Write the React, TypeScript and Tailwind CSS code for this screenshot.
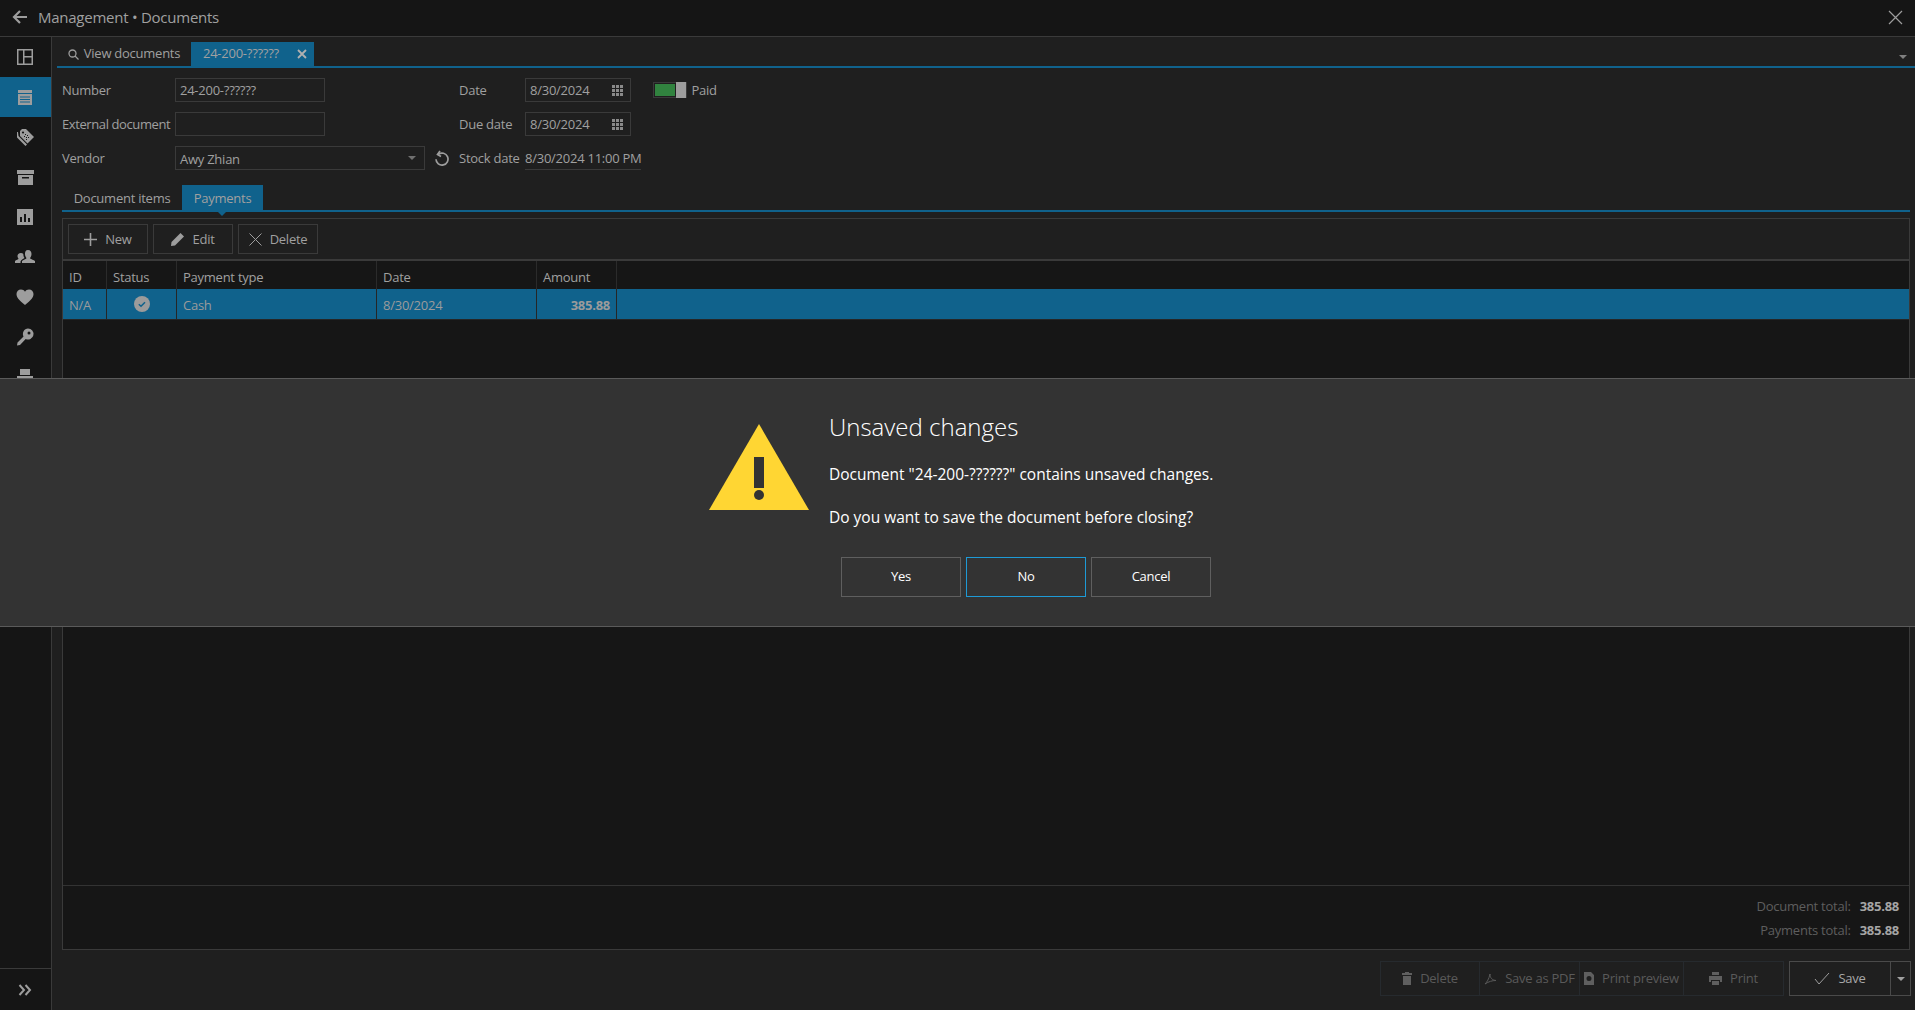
import { ReactNode } from "react";

const grey = "#9d9d9d";

function NavIcon({ active, children }: { active?: boolean; children: ReactNode }) {
  return (
    <div className={`flex h-10 shrink-0 items-center justify-center pr-px ${active ? "bg-[#10628c]" : ""}`}>
      <svg width="20" height="20" viewBox="0 0 20 20" fill={grey}>
        {children}
      </svg>
    </div>
  );
}

function Sidebar() {
  return (
    <aside className="flex w-[52px] shrink-0 flex-col border-r border-[#3a3a3a] bg-[#151515]">
      <div className="flex-1 overflow-hidden">
        <NavIcon>
          <path d="M2 2h16v16H2z M3.500 3.500v13H8v-13z M9.500 3.500V9h7V3.500z M9.500 10.500v6h7v-6z" fillRule="evenodd" />
        </NavIcon>
        <NavIcon active>
          <path d="M3 3h14v3H3z" />
          <path
            d="M3 7h14v11H3z M5 9.500v1h10v-1z M5 12v1h10v-1z M5 14.500v1h10v-1z"
            fillRule="evenodd"
          />
        </NavIcon>
        <NavIcon>
          <path d="M7 2h4l8 8-6.500 6.500L5 9V4z" />
          <path d="M3 5l.5 4 8.500 8.500-1.500 1.500L2 10.500V5z" />
          <circle cx="8" cy="5.500" r="1.100" fill="#151515" />
          <path d="M10 7h1v1h-1z M12 8h1v1h-1z M9 9h1v1H9z M11 10h1v1h-1z M13 10h1v1h-1z M11 12h1v1h-1z" fill="#151515" />
        </NavIcon>
        <NavIcon>
          <path d="M2 3h17v4H2z" />
          <path d="M3 8h15v10H3z M7 10v1.500h7V10z" fillRule="evenodd" />
        </NavIcon>
        <NavIcon>
          <path d="M2 2h16v16H2z M5 10v5h2v-5z M9 7v8h2V7z M13 11v4h2v-4z" fillRule="evenodd" />
        </NavIcon>
        <NavIcon>
          <path d="M13 3c2.500 0 3.500 2 3.500 4 0 2-1 3.500-1.500 4 0 1 3 1.500 5 3v2H7v-2c2-1.500 4.500-2 4.500-3-.5-.5-1.500-2-1.500-4s.5-4 3-4z" />
          <path d="M6 6c1 0 1.800.4 2.300 1 0 1.500.5 3 1.200 4-.5.5-3.500 1.500-4 3.500V16H0v-2c1-1 3.500-1.500 3.500-2.500-.5-.5-1-1.500-1-2.500 0-1.500 1-3 3.500-3z" />
        </NavIcon>
        <NavIcon>
          <path d="M10 18C4 13 1.500 10.500 1.500 7c0-2.500 2-4.500 4.500-4.500 1.700 0 3.200.9 4 2.300.8-1.400 2.300-2.300 4-2.300 2.500 0 4.500 2 4.500 4.500 0 3.500-2.500 6-8.500 11z" />
        </NavIcon>
        <NavIcon>
          <path
            d="M13 1.500a5.500 5.500 0 1 1-2.300 10.500L5 18l-3 .5.500-3 6-6A5.500 5.500 0 0 1 13 1.500z M14 4.500a1.500 1.500 0 1 0 0 3 1.500 1.500 0 0 0 0-3z"
            fillRule="evenodd"
          />
        </NavIcon>
        <NavIcon>
          <path d="M5 2h10v6H5z M2 9h16v8H2z" />
        </NavIcon>
      </div>
      <div className="flex h-[42px] shrink-0 items-center justify-center border-t border-[#3a3a3a] pr-px">
        <svg width="14" height="12" viewBox="0 0 14 12" fill="none" stroke={grey} strokeWidth="2">
          <path d="M1.500 1l4.500 5-4.500 5 M7.500 1l4.500 5-4.500 5" />
        </svg>
      </div>
    </aside>
  );
}

function Field({ w, children, arrow }: { w: string; children?: ReactNode; arrow?: boolean }) {
  return (
    <div className={`flex h-6 items-center justify-between border border-[#3a3a3a] pl-1 pr-2 ${w}`}>
      <span>{children}</span>
      {arrow && <span className="border-x-4 border-t-4 border-x-transparent border-t-[#707070]" />}
    </div>
  );
}

function DateField({ value }: { value: string }) {
  return (
    <div className="flex h-6 w-[106px] items-center justify-between border border-[#3a3a3a] pl-1 pr-[7px]">
      <span>{value}</span>
      <svg width="11" height="11" viewBox="0 0 11 11" fill="#8a8a8a">
        <path d="M0 0h3v3H0z M4 0h3v3H4z M8 0h3v3H8z M0 4h3v3H0z M4 4h3v3H4z M8 4h3v3H8z M0 8h3v3H0z M4 8h3v3H4z M8 8h3v3H8z" />
      </svg>
    </div>
  );
}

function DocumentForm() {
  return (
    <div className="flex h-[117px] shrink-0 pl-[10px] pt-[10px] text-[13px] leading-none">
      <div className="grid w-[363px] shrink-0 grid-cols-[113px_1fr] content-start items-center gap-y-[10px]">
        <span>Number</span>
        <Field w="w-[150px]">24-200-??????</Field>
        <span className="tracking-[-0.4px]">External document</span>
        <Field w="w-[150px]" />
        <span>Vendor</span>
        <div className="flex items-center">
          <Field w="w-[250px]" arrow>
            <span className="relative top-px">Awy Zhian</span>
          </Field>
          <svg className="ml-[9px]" width="15" height="16" viewBox="0 0 15 16" fill="none" stroke={grey} strokeWidth="1.700">
            <path d="M4.500 4.200a6 6 0 1 1-2.500 5" />
            <path d="M6 1L3.500 4.500 7 6.500" />
          </svg>
        </div>
      </div>
      <div className="ml-[34px] grid grid-cols-[66px_auto] content-start items-center gap-y-[10px]">
        <span>Date</span>
        <DateField value="8/30/2024" />
        <span>Due date</span>
        <DateField value="8/30/2024" />
        <span>Stock date</span>
        <span className="flex h-6 items-center border-b border-[#3a3a3a] pt-px whitespace-nowrap">8/30/2024 11:00 PM</span>
      </div>
      <div className="ml-[12px] flex h-6 items-center gap-1 self-start">
        <div className="flex h-4 w-[34px] items-stretch border border-[#3a3a3a]">
          <span className="m-px flex-1 bg-[#31833f]" />
          <span className="-my-px w-[10px] bg-[#9d9d9d]" />
        </div>
        <span>Paid</span>
      </div>
    </div>
  );
}

function ToolButton({ icon, label }: { icon: ReactNode; label: string }) {
  return (
    <button className="flex h-[30px] w-20 items-center justify-center gap-2 border border-[#3a3a3a] pt-px text-[13px]">
      {icon}
      <span>{label}</span>
    </button>
  );
}

const columns = [
  { head: "ID", cell: "N/A", w: "w-[44px]", align: "pl-[6px]" },
  { head: "Status", cell: "", w: "w-[70px]", align: "justify-center" },
  { head: "Payment type", cell: "Cash", w: "w-[200px]", align: "pl-[6px]" },
  { head: "Date", cell: "8/30/2024", w: "w-[160px]", align: "pl-[6px]" },
  { head: "Amount", cell: "385.88", w: "w-[80px]", align: "justify-end pr-[6px] font-bold" },
];

function PaymentsTable() {
  return (
    <div className="flex min-h-0 flex-1 flex-col bg-[#161616]">
      <div className="flex h-[28px] shrink-0 text-[13px]">
        {columns.map((c) => (
          <div key={c.head} className={`flex items-center border-r border-[#2b2b2b] pt-[5px] pl-[6px] ${c.w}`}>
            {c.head}
          </div>
        ))}
      </div>
      <div className="flex h-[31px] shrink-0 border-b border-[#262626] bg-[#10628c] text-[13px] text-[#9b9b9b]">
        {columns.map((c) => (
          <div key={c.head} className={`flex items-center border-r border-[#262626] ${c.w} ${c.align}`}>
            {c.head === "Status" ? (
              <svg width="16" height="16" viewBox="0 0 16 16">
                <circle cx="8" cy="8" r="8" fill="#9b9b9b" />
                <path d="M4.800 8.200l2.200 2 4-4" fill="none" stroke="#10628c" strokeWidth="1.500" />
              </svg>
            ) : (
              <span className="relative top-[2px]">{c.cell}</span>
            )}
          </div>
        ))}
      </div>
      <div className="flex-1" />
    </div>
  );
}

function Totals() {
  return (
    <div className="flex h-[64px] shrink-0 flex-col items-end gap-[6px] border-t border-[#333] bg-[#161616] pr-[10px] pt-[11px] text-[13px] leading-[18px] text-[#5e5e5e]">
      <div className="flex gap-[9px]">
        <span>Document total:</span>
        <span className="font-bold text-[#a5a5a5]">385.88</span>
      </div>
      <div className="flex gap-[9px]">
        <span>Payments total:</span>
        <span className="font-bold text-[#a5a5a5]">385.88</span>
      </div>
    </div>
  );
}

function FooterButton({ w, icon, label }: { w: string; icon: ReactNode; label: string }) {
  return (
    <div className={`flex items-center justify-center gap-2 border-r border-[#262a2e] last:border-r-0 ${w}`}>
      {icon}
      <span>{label}</span>
    </div>
  );
}

function Footer() {
  return (
    <div className="-mr-px flex h-[60px] shrink-0 items-start justify-end gap-[5px] pt-[11px] text-[13px] text-[#5a5a5a]">
      <div className="flex h-[35px] border border-[#262a2e]">
        <FooterButton
          w="w-[99px]"
          label="Delete"
          icon={
            <svg width="10" height="13" viewBox="0 0 10 13" fill="#5f5f5f">
              <path d="M3 0h4v1h3v2H0V1h3z M1 4h8v9H1z" />
            </svg>
          }
        />
        <FooterButton
          w="w-[100px]"
          label="Save as PDF"
          icon={
            <svg width="13" height="13" viewBox="0 0 13 13" fill="none" stroke="#5a5a5a">
              <path d="M1 12c2-2 4-5 5-10 0 4 2 6 6 6.500-4 0-7 1-11 3.500z" />
            </svg>
          }
        />
        <FooterButton
          w="w-[104px]"
          label="Print preview"
          icon={
            <svg width="10" height="13" viewBox="0 0 10 13" fill="#5f5f5f">
              <path d="M0 0h7l3 3v10H0z M5 4a2.500 2.500 0 1 0 0 5 2.500 2.500 0 0 0 0-5z" fillRule="evenodd" />
            </svg>
          }
        />
        <FooterButton
          w="w-[99px]"
          label="Print"
          icon={
            <svg width="13" height="13" viewBox="0 0 13 13" fill="#5f5f5f">
              <path d="M3 0h7v3H3z M0 4h13v6h-2V8H2v2H0z M3 9h7v4H3z" />
            </svg>
          }
        />
      </div>
      <div className="flex h-[35px] border border-[#4a4a4a] text-[#a8a8a8]">
        <div className="flex w-[101px] items-center justify-center gap-2 border-r border-[#4a4a4a]">
          <svg width="16" height="13" viewBox="0 0 16 13" fill="none" stroke="#9d9d9d">
            <path d="M1 7l4 5L15 1" />
          </svg>
          <span>Save</span>
        </div>
        <div className="flex w-[19px] items-center justify-center">
          <span className="border-x-[4px] border-t-[4px] border-x-transparent border-t-[#a0a0a0]" />
        </div>
      </div>
    </div>
  );
}

function UnsavedDialog() {
  return (
    <div className="absolute inset-x-0 top-[378px] flex h-[249px] justify-center border-y border-[#5a5a5a] bg-[#333333] pt-[29px] pl-[5px] tracking-normal text-white">
      <div className="flex">
        <svg className="mt-[16px] mr-5" width="100" height="86" viewBox="0 0 100 86">
          <path d="M50 0l50 86H0z" fill="#ffd633" />
          <path d="M45 33h10v31H45z" fill="#333" />
          <circle cx="50" cy="71" r="5" fill="#333" />
        </svg>
        <div className="flex w-[382px] flex-col text-[15.500px]">
          <h2 className="text-[24px] leading-[38px] font-light">Unsaved changes</h2>
          <p className="mt-4 leading-[24px] whitespace-nowrap">Document "24-200-??????" contains unsaved changes.</p>
          <p className="mt-[19px] leading-[24px] whitespace-nowrap">Do you want to save the document before closing?</p>
          <div className="mt-7 ml-3 flex gap-[5px] text-[13px] tracking-[-0.25px]">
            <button className="h-10 w-[120px] border border-[#5f5f5f]">Yes</button>
            <button className="h-10 w-[120px] border border-[#1e9ad6]">No</button>
            <button className="h-10 w-[120px] border border-[#5f5f5f]">Cancel</button>
          </div>
        </div>
      </div>
    </div>
  );
}

export default function App() {
  return (
    <div
      className="relative flex h-[1010px] flex-col overflow-hidden bg-[#1f1f1f] tracking-[-0.25px] text-[#a0a0a0]"
      style={{ fontFamily: '"Open Sans", sans-serif' }}
    >
      <header className="flex h-[37px] shrink-0 items-center border-b border-[#3a3a3a] bg-[#151515] pb-[2px]">
        <svg className="ml-3" width="15" height="14" viewBox="0 0 15 14" fill="none" stroke={grey} strokeWidth="2.200">
          <path d="M15 7H2 M8 1L2 7l6 6" />
        </svg>
        <span className="ml-[11px] text-[15px]">Management • Documents</span>
        <svg className="mr-3 ml-auto" width="15" height="15" viewBox="0 0 15 15" stroke={grey} strokeWidth="1.200">
          <path d="M1 1l13 13 M14 1L1 14" />
        </svg>
      </header>

      <div className="flex min-h-0 flex-1">
        <Sidebar />
        <main className="flex min-w-0 flex-1 flex-col">
          <div className="ml-[5px] flex h-[31px] shrink-0 items-end border-b-2 border-[#10628c] text-[13px]">
            <div className="flex h-6 w-[134px] items-center justify-center gap-[5px]">
              <svg width="11" height="11" viewBox="0 0 11 11" fill="none" stroke={grey} strokeWidth="1.300">
                <circle cx="4.500" cy="4.500" r="3.500" />
                <path d="M7 7l3.500 3.500" />
              </svg>
              <span>View documents</span>
            </div>
            <div className="flex h-6 w-[123px] items-center bg-[#10628c] pl-3">
              <span>24-200-??????</span>
              <svg className="ml-[18px]" width="10" height="10" viewBox="0 0 10 10" stroke="#b0b0b0" strokeWidth="1.800">
                <path d="M1 1l8 8 M9 1L1 9" />
              </svg>
            </div>
            <span className="mr-2 mb-[7px] ml-auto border-x-4 border-t-4 border-x-transparent border-t-[#808080]" />
          </div>

          <DocumentForm />

          <div className="mr-[5px] ml-[10px] flex min-h-0 flex-1 flex-col">
            <div className="relative flex h-[27px] shrink-0 items-end border-b-2 border-[#10628c] text-[13px]">
              <div className="flex h-[25px] w-[120px] items-center justify-center pt-[2px]">Document items</div>
              <div className="flex h-[25px] w-[81px] items-center justify-center bg-[#10628c] pt-[2px]">Payments</div>
              <span className="absolute top-[27px] left-[156px] border-x-[4px] border-t-[4px] border-x-transparent border-t-[#10628c]" />
            </div>
            <div className="mt-[6px] flex min-h-0 flex-1 flex-col border border-[#3a3a3a]">
              <div className="flex h-[42px] shrink-0 items-start gap-[5px] border-b-2 border-[#3a3a3a] pt-[5px] pl-[5px]">
                <ToolButton
                  label="New"
                  icon={
                    <svg width="13" height="13" viewBox="0 0 13 13" stroke={grey} strokeWidth="1.600">
                      <path d="M6.500 0v13 M0 6.500h13" />
                    </svg>
                  }
                />
                <ToolButton
                  label="Edit"
                  icon={
                    <svg width="13" height="13" viewBox="0 0 13 13" fill={grey}>
                      <path d="M9.500 0L13 3.500 4 12.500 0 13l.5-4z" />
                    </svg>
                  }
                />
                <ToolButton
                  label="Delete"
                  icon={
                    <svg width="13" height="13" viewBox="0 0 13 13" stroke={grey}>
                      <path d="M.5.5l12 12 M12.500.5l-12 12" />
                    </svg>
                  }
                />
              </div>
              <PaymentsTable />
              <Totals />
            </div>
            <Footer />
          </div>
        </main>
      </div>

      <UnsavedDialog />
    </div>
  );
}
